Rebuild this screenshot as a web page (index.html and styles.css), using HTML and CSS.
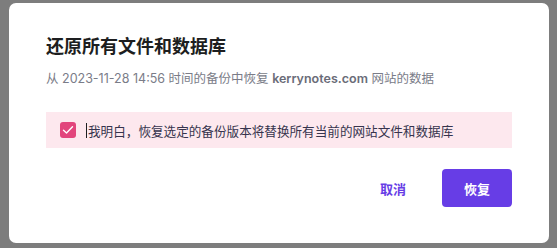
FILE: index.html
```html
<!DOCTYPE html>
<html lang="zh-CN">
<head>
    <meta charset="UTF-8">
    <meta name="viewport" content="width=device-width, initial-scale=1.0">
    <title>还原所有文件和数据库</title>
    <link rel="stylesheet" href="styles.css">
</head>
<body>
    <!-- Restore dialog -->
    <div class="modal">
        <h2 class="modal-title">还原所有文件和数据库</h2>
        <p class="modal-subtitle">从 2023-11-28 14:56 时间的备份中恢复 <b>kerrynotes.com</b> 网站的数据</p>

        <label class="confirm-box">
            <span class="checkbox">
                <svg width="12" height="10" viewBox="0 0 12 10"><path d="M1.5 5.2 4.5 8 10.5 1.8" fill="none" stroke="#ffffff" stroke-width="1.4" stroke-linecap="round" stroke-linejoin="round"/></svg>
            </span>
            <span class="confirm-text"><span class="caret"></span>我明白，恢复选定的备份版本将替换所有当前的网站文件和数据库</span>
        </label>

        <div class="modal-actions">
            <button class="btn-text">取消</button>
            <button class="btn-primary">恢复</button>
        </div>
    </div>
</body>
</html>
```

FILE: styles.css
```css
body {
    margin: 0;
    background: #7d7d7d;
    font-family: Inter, "Noto Sans CJK SC", sans-serif;
}

.modal {
    box-sizing: border-box;
    width: 540px;
    height: 240px;
    margin: 3px 0 0 9px;
    padding: 32px 37px 0 37px;
    background: #ffffff;
    border-radius: 7px;
}

.modal-title {
    margin: 0;
    font-size: 18px;
    line-height: 24px;
    font-weight: 700;
    color: #1d1e20;
}

.modal-subtitle {
    margin: 10px 0 0 0;
    font-size: 12.5px;
    line-height: 20px;
    color: #7a7c88;
}

.modal-subtitle b {
    font-weight: 600;
    color: #6a6c78;
}

.confirm-box {
    display: flex;
    align-items: center;
    gap: 10px;
    height: 36px;
    margin-top: 23px;
    padding: 0 14px;
    background: #fde8ee;
}

.checkbox {
    display: flex;
    align-items: center;
    justify-content: center;
    width: 16px;
    height: 16px;
    border-radius: 3px;
    background: #e2457c;
}

.confirm-text {
    display: flex;
    align-items: center;
    font-size: 12.6px;
    color: #36344d;
}

.caret {
    width: 1px;
    height: 15px;
    margin-right: 1px;
    background: #1d1e20;
}

.modal-actions {
    display: flex;
    justify-content: flex-end;
    align-items: center;
    gap: 24px;
    margin-top: 21px;
}

.btn-text,
.btn-primary {
    font-family: inherit;
    font-size: 13px;
    font-weight: 700;
    border: none;
    cursor: pointer;
}

.btn-text {
    padding: 0 12px;
    height: 38px;
    background: none;
    color: #673de6;
}

.btn-primary {
    width: 70px;
    height: 38px;
    border-radius: 4px;
    background: #673de6;
    color: #ffffff;
}
```
